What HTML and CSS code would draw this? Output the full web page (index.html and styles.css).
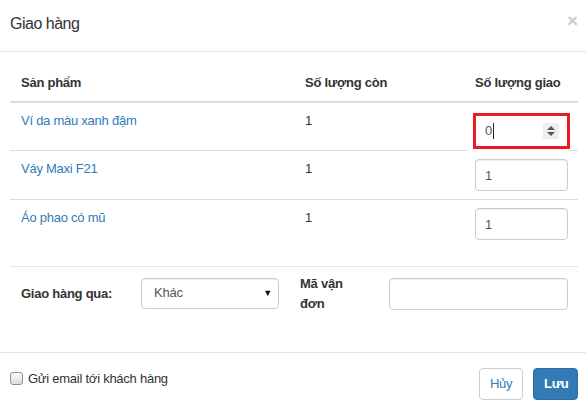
FILE: index.html
```html
<!DOCTYPE html>
<html lang="vi">
<head>
<meta charset="utf-8">
<title>Giao hàng</title>
<link rel="stylesheet" href="styles.css">
</head>
<body>
<div class="modal">
  <div class="modal-header">
    <h4 class="modal-title">Giao hàng</h4>
    <span class="close">×</span>
  </div>
  <div class="modal-body">
    <table class="items">
      <colgroup>
        <col class="c1"><col class="c2"><col class="c3">
      </colgroup>
      <thead>
        <tr><th>Sản phẩm</th><th>Số lượng còn</th><th>Số lượng giao</th></tr>
      </thead>
      <tbody>
        <tr class="first">
          <td><a class="link">Ví da màu xanh đậm</a></td>
          <td>1</td>
          <td class="focus-cell">
            <div class="num-focus">
              <span class="val">0</span><span class="caret"></span>
              <span class="spin">
                <svg width="16" height="16" viewBox="0 0 16 16"><path d="M8 3 L12 7 L4 7 Z M4 9 L12 9 L8 13 Z" fill="#555"/></svg>
              </span>
            </div>
          </td>
        </tr>
        <tr>
          <td><a class="link">Váy Maxi F21</a></td>
          <td>1</td>
          <td><div class="field">1</div></td>
        </tr>
        <tr>
          <td><a class="link">Áo phao có mũ</a></td>
          <td>1</td>
          <td><div class="field">1</div></td>
        </tr>
      </tbody>
    </table>
    <div class="ship-row">
      <label class="lbl lbl-ship">Giao hàng qua:</label>
      <div class="select"><span>Khác</span><span class="arrow">▼</span></div>
      <label class="lbl lbl-code">Mã vận<br>đơn</label>
      <div class="field field-code"></div>
    </div>
  </div>
  <div class="modal-footer">
    <label class="check"><span class="box"></span><span>Gửi email tới khách hàng</span></label>
    <div class="buttons">
      <button class="btn btn-default">Hủy</button>
      <button class="btn btn-primary">Lưu</button>
    </div>
  </div>
</div>
</body>
</html>
```

FILE: styles.css
```css
* { box-sizing: border-box; }
html, body { margin: 0; padding: 0; background: #fff; }
body {
  font-family: "Liberation Sans", Arial, sans-serif;
  font-size: 13px;
  line-height: 18.6px;
  color: #333;
  width: 586px;
  height: 414px;
  overflow: hidden;
}
.modal { width: 586px; }
.modal-header {
  display: flex;
  justify-content: space-between;
  align-items: flex-start;
  padding: 14px 8px 0 10px;
  height: 52px;
  border-bottom: 1px solid #e5e5e5;
}
.modal-title {
  margin: 0;
  font-size: 16px;
  line-height: 20px;
  font-weight: normal;
  letter-spacing: -0.5px;
  color: #333;
}
.close {
  font-size: 19px;
  font-weight: bold;
  line-height: 14px;
  color: #000;
  opacity: 0.2;
}
.modal-body { padding: 14px 8px 0 10px; }
.items {
  width: 568px;
  border-collapse: collapse;
  table-layout: fixed;
  letter-spacing: -0.25px;
}
.c1 { width: 287px; }
.c2 { width: 170px; }
.c3 { width: 111px; }
.items th {
  text-align: left;
  font-weight: bold;
  padding: 8px 8px 8px 11px;
  border-bottom: 2px solid #ddd;
  vertical-align: bottom;
}
.items th:nth-child(2), .items td:nth-child(2) { padding-left: 8px; }
.items th:nth-child(3), .items td:nth-child(3) { padding-left: 8px; }
.items td {
  padding: 9px 8px 8px 11px;
  border-top: 1px solid #ddd;
  vertical-align: top;
  height: 49px;
}
.items tbody tr.first td { border-top: 0; padding-top: 9px; }
.items td:nth-child(3) { padding-top: 8px; padding-bottom: 8px; }
.items tbody tr.first td.focus-cell { padding-top: 10px; padding-bottom: 0; }
.link { color: #337ab7; text-decoration: none; }
.field {
  width: 93px;
  height: 32px;
  border: 1px solid #ccc;
  border-radius: 4px;
  padding: 6px 9px;
  line-height: 20px;
  color: #555;
  box-shadow: inset 0 1px 1px rgba(0,0,0,0.075);
}
.num-focus {
  position: relative;
  width: 97px;
  height: 36px;
  margin: 0 0 0 -2px;
  border: 3px solid #e81c24;
  display: flex;
  align-items: center;
  padding-left: 9px;
  color: #555;
}
.num-focus::after {
  content: "";
  position: absolute;
  left: -8px;
  width: 100px;
  bottom: -8px;
  height: 5px;
  background: #fff;
}
.val { line-height: 16px; }
.caret { width: 1px; height: 16px; background: #222; margin-left: 1px; }
.spin {
  margin-left: auto;
  margin-right: 8px;
  width: 16px;
  height: 16px;
  background: #eee;
  display: flex;
}
.ship-row {
  margin-top: 17px;
  border-top: 1px solid #e5e5e5;
  padding-top: 7px;
  display: flex;
  align-items: center;
  height: 48px;
  letter-spacing: -0.25px;
}
.lbl { font-weight: bold; color: #333; line-height: 20px; }
.lbl-ship { margin-left: 11px; width: 120px; }
.select {
  width: 138px;
  height: 31px;
  border: 1px solid #ccc;
  border-radius: 4px;
  display: flex;
  align-items: center;
  justify-content: space-between;
  padding: 0 6px 0 12px;
  color: #555;
  box-shadow: inset 0 1px 1px rgba(0,0,0,0.075);
}
.arrow { font-size: 9px; color: #111; }
.lbl-code { margin-left: 21px; width: 89px; }
.field-code { width: 179px; height: 32px; }
.modal-footer {
  margin-top: 38px;
  border-top: 1px solid #e5e5e5;
  padding: 15px 8px 0 10px;
  display: flex;
  justify-content: space-between;
  align-items: flex-start;
}
.check {
  display: flex;
  align-items: center;
  gap: 5px;
  margin-top: 2px;
  letter-spacing: -0.25px;
  color: #333;
}
.box {
  width: 13px;
  height: 13px;
  border: 1px solid #8f8f8f;
  border-radius: 3px;
  background: linear-gradient(#fcfcfc, #dcdcdc);
}
.buttons { display: flex; gap: 10px; }
.btn {
  font-family: inherit;
  font-size: 13px;
  line-height: 18.6px;
  height: 32px;
  padding: 6px 10px;
  border-radius: 4px;
  border: 1px solid #ccc;
  letter-spacing: -0.3px;
}
.btn-default { background: #fff; color: #337ab7; width: 44px; }
.btn-primary { background: #337ab7; border-color: #2e6da4; color: #fff; font-weight: bold; width: 45px; }
```
